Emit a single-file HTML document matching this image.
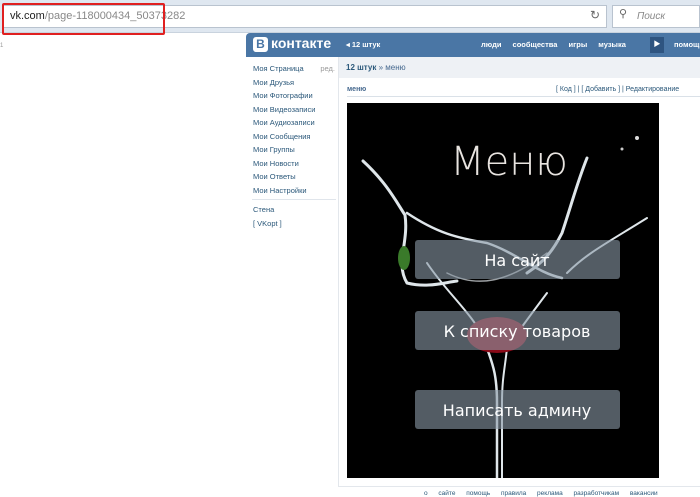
<!DOCTYPE html>
<html><head><meta charset="utf-8"><style>
*{margin:0;padding:0;box-sizing:border-box}
body{width:700px;height:497px;overflow:hidden;background:#fff;font-family:"Liberation Sans","Noto Sans CJK SC",sans-serif;position:relative}
.abs{position:absolute}
.bar{left:0;top:0;width:700px;height:33px;background:#dfe7f0;border-bottom:1px solid #c9d3de}
.url{left:2px;top:5px;width:605px;height:23px;background:#fff;border:1px solid #b9c3cf;font-size:11px;line-height:21px;padding-left:7px;color:#888}
.url b{color:#222;font-weight:normal}
.red{left:2px;top:3px;width:163px;height:32px;border:2px solid #e02020;border-radius:2px}
.srch{left:612px;top:5px;width:88px;height:23px;background:#fff;border:1px solid #b9c3cf;font-size:10px;font-style:italic;color:#888;line-height:21px;padding-left:24px}
.hdr{left:246px;top:33px;width:454px;height:24px;background:#4a76a5;border-radius:4px 0 0 0;color:#fff;font-size:7.5px;font-weight:bold}
.menu a{display:block;font-size:7.5px;color:#2b587a;height:13.5px;line-height:13px}
.foot{font-size:6.5px;color:#2b587a}
</style></head><body>
<div class="abs bar"></div>
<div class="abs url"><b>vk.com</b>/page-118000434_50373282</div>
<div class="abs red"></div>
<div class="abs" style="left:590px;top:8px;font-size:12px;color:#666">↻</div>
<div class="abs srch">Поиск</div>
<div class="abs" style="left:619px;top:7px;font-size:11px;color:#666">⚲</div>
<div class="abs" style="left:0;top:43px;font-size:6px;color:#999">1</div>
<div class="abs hdr">
 <div class="abs" style="left:7px;top:4px;width:15px;height:15px;background:#fff;border-radius:3px;color:#4a76a5;font-size:12px;text-align:center;line-height:15px">В</div>
 <div class="abs" style="left:25px;top:2px;font-size:14px;font-weight:bold">контакте</div>
 <div class="abs" style="left:100px;top:7px">◂ 12 штук</div>
 <div class="abs" style="left:235px;top:7px;word-spacing:9px">люди сообщества игры музыка</div>
 <div class="abs" style="left:404px;top:4px;width:14px;height:16px;background:#2e5480;font-size:7px;text-align:center;line-height:16px">▶</div>
 <div class="abs" style="left:428px;top:7px">помощь</div>
</div>
<div class="abs menu" style="left:253px;top:62px;width:82px">
 <a>Моя Страница <span style="float:right;color:#999">ред.</span></a>
 <a>Мои Друзья</a><a>Мои Фотографии</a><a>Мои Видеозаписи</a><a>Мои Аудиозаписи</a><a>Мои Сообщения</a><a>Мои Группы</a><a>Мои Новости</a><a>Мои Ответы</a><a>Мои Настройки</a>
</div>
<div class="abs" style="left:252px;top:199px;width:84px;border-top:1px solid #e0e5eb"></div>
<div class="abs menu" style="left:253px;top:203px"><a>Стена</a><a>[ VKopt ]</a></div>
<div class="abs" style="left:338px;top:57px;width:362px;height:21px;background:#eef1f5;font-size:8px;color:#2b587a;padding:6px 0 0 8px"><b>12 штук</b> <span style="color:#45688e">» меню</span></div>
<div class="abs" style="left:338px;top:57px;width:1px;height:430px;background:#e3e7ec"></div>
<div class="abs" style="left:347px;top:86px;font-size:7px;font-weight:bold;color:#45688e">меню</div>
<div class="abs" style="left:556px;top:86px;font-size:7px;color:#2b587a">[ Код ] | [ Добавить ] | Редактирование</div>
<div class="abs" style="left:347px;top:96px;width:353px;border-top:1px solid #dae1e8"></div>
<div class="abs" style="left:338px;top:486px;width:362px;border-top:1px solid #e3e7ec"></div>
<div class="abs foot" style="left:424px;top:490px;word-spacing:9px">о&nbsp;сайте помощь правила реклама разработчикам вакансии</div>
<svg class="abs" style="left:347px;top:103px" width="312" height="375" viewBox="0 0 312 375">
 <rect width="312" height="375" fill="#000"/>
 <g fill="none" stroke="#dfe6ea" stroke-linecap="round">
  <path d="M16 58 C40 80 50 100 58 112 C62 140 48 160 60 180 C80 185 95 180 110 178" stroke-width="3"/>
  <path d="M60 110 C90 130 110 135 140 140 C170 150 190 170 215 175" stroke-width="2.5"/>
  <path d="M240 55 C230 80 225 100 215 130 C205 150 195 160 180 170" stroke-width="3"/>
  <path d="M220 170 C240 150 260 140 300 115" stroke-width="2"/>
  <path d="M80 160 C100 190 125 210 140 240" stroke-width="2"/>
  <path d="M200 190 C185 210 170 230 160 245" stroke-width="2"/>
  <path d="M140 245 C145 260 150 270 150 300 L150 375" stroke-width="2.5"/>
  <path d="M160 245 C158 265 155 275 155 300 L155 375" stroke-width="2"/>
  <path d="M100 170 C130 185 160 180 200 150" stroke-width="1.5" opacity=".7"/>
 </g>
 <circle cx="290" cy="35" r="2" fill="#ddd"/><circle cx="275" cy="46" r="1.5" fill="#ccc"/>
 <ellipse cx="150" cy="232" rx="30" ry="18" fill="#8a0a18"/>
 <ellipse cx="57" cy="155" rx="6" ry="12" fill="#3a7a2a"/>
 <text x="162" y="72" text-anchor="middle" font-family="DejaVu Sans,sans-serif" font-size="40" fill="#e8e4e0" font-weight="300">Меню</text>
 <g font-family="DejaVu Sans,sans-serif" font-size="16" fill="#fff" text-anchor="middle">
  <rect x="68" y="137" width="205" height="39" rx="3" fill="#8a9aa6" opacity=".6"/>
  <text x="170" y="163">На сайт</text>
  <rect x="68" y="208" width="205" height="39" rx="3" fill="#8a9aa6" opacity=".6"/>
  <text x="170" y="234">К списку товаров</text>
  <rect x="68" y="287" width="205" height="39" rx="3" fill="#8a9aa6" opacity=".6"/>
  <text x="170" y="313">Написать админу</text>
 </g>
</svg>
</body></html>
